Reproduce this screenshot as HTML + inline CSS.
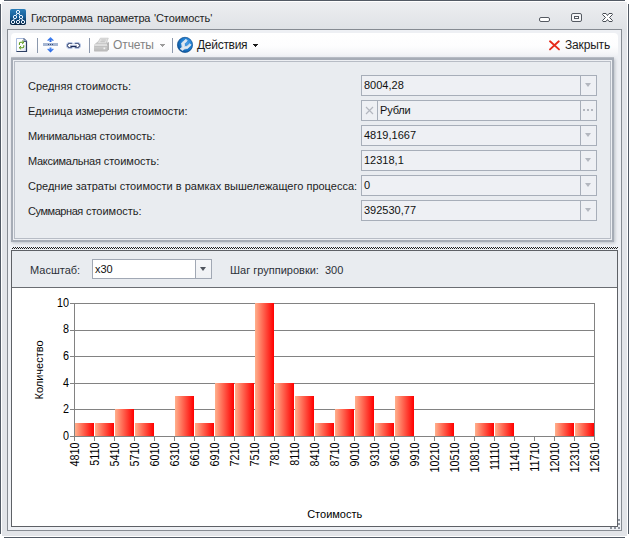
<!DOCTYPE html>
<html lang="ru">
<head>
<meta charset="utf-8">
<title>Гистограмма параметра 'Стоимость'</title>
<style>
html,body{margin:0;padding:0;background:#fff;}
body{width:629px;height:538px;position:relative;overflow:hidden;font-family:"Liberation Sans",sans-serif;font-size:11px;color:#202020;}
.abs{position:absolute;}
#win{position:absolute;left:0;top:0;width:629px;height:538px;background:#fff;}
.edge{position:absolute;background:#525a65;}
#frame{position:absolute;left:2px;top:2px;width:625px;height:534px;background:linear-gradient(#edeef1 0,#e7e9ec 12px,#dfe2e6 27px,#e2e4e8 40px,#e2e4e8 100%);}
.title{position:absolute;left:30px;top:11px;font-size:11px;line-height:14px;color:#1e1e1e;white-space:nowrap;}
#client{position:absolute;left:7px;top:29px;width:613px;height:500px;border:1px solid #868b92;background:#eef0f4;}
#toolbar{position:absolute;left:11px;top:33px;width:607px;height:24px;background:linear-gradient(#ffffff 0,#fdfdfe 55%,#f6f7f9 80%,#eef0f4 100%);border-radius:4px;}
.tsep{position:absolute;top:38px;width:1px;height:15px;background:#8b98ad;}
.tbtxt{position:absolute;top:38px;line-height:14px;font-size:12px;white-space:nowrap;}
#panel{position:absolute;left:11px;top:58px;width:599px;height:180px;border:2px solid #a6acb6;background:#edeff3;box-shadow:1px 1px 3px rgba(90,98,112,.35), 0 -1px 0 rgba(150,156,166,.55);}
#panelin{position:absolute;left:14px;top:61px;width:595px;height:176px;border:1px solid #b7bcc5;background:#e9ecf0;}
.lbl{position:absolute;left:28px;line-height:14px;white-space:nowrap;color:#1e1e1e;}
.inp{position:absolute;left:361px;width:234px;height:19px;border:1px solid #a7aeb9;background:#eef0f4;}
.inp .v{position:absolute;left:2px;top:2px;line-height:14px;white-space:nowrap;color:#101010;}
.inp .dv{position:absolute;left:218px;top:0;width:1px;height:19px;background:#a7aeb9;}
.inp .ar{position:absolute;left:223px;top:7px;width:0;height:0;border-left:3.5px solid transparent;border-right:3.5px solid transparent;border-top:4px solid #b3b7bf;}
#split{position:absolute;left:12px;top:247px;width:606px;height:2px;}
#lower{position:absolute;left:11px;top:250px;width:605px;height:275px;border:1px solid #5e6166;background:#e9ecf0;}
#chartbg{position:absolute;left:12px;top:288px;width:605px;height:238px;background:#fff;}
#chartline{position:absolute;left:12px;top:287px;width:605px;height:1px;background:#6a6d72;}
#combo{position:absolute;left:92px;top:259px;width:118px;height:18px;border:1px solid #a1a8b4;background:#fff;}
</style>
</head>
<body>
<div id="win"><i class="edge" style="left:4px;top:0;width:621px;height:1px"></i><i class="edge" style="left:4px;top:537px;width:621px;height:1px"></i><i class="edge" style="left:0;top:4px;width:1px;height:530px"></i><i class="edge" style="left:628px;top:4px;width:1px;height:530px"></i><div id="frame"></div></div>

<!-- title icon -->
<svg class="abs" style="left:10px;top:9px" width="16" height="16" viewBox="0 0 16 16">
<defs><linearGradient id="ig" x1="0" y1="0" x2="0" y2="1"><stop offset="0" stop-color="#2a7db8"/><stop offset="0.5" stop-color="#155c96"/><stop offset="1" stop-color="#03203e"/></linearGradient></defs>
<rect x="0" y="0" width="16" height="16" rx="1.800" fill="url(#ig)"/>
<g stroke="#eaf4ff" stroke-width="1" fill="none">
<path d="M7 4.600 L6 6.400 M9 4.600 L10 6.400 M4.200 9.600 L3.600 11.200 M10.200 9.600 L9 11.300 M11.800 9.600 L12.500 11.200"/>
<circle cx="8" cy="3" r="1.650"/>
<circle cx="5" cy="8" r="1.650"/>
<circle cx="11" cy="8" r="1.650"/>
<circle cx="3" cy="13" r="1.650"/>
<circle cx="8" cy="13" r="1.650"/>
<circle cx="13" cy="13" r="1.650"/>
</g>
</svg>
<div class="title" style="left:31px;letter-spacing:-.36px">Гистограмма</div><div class="title" style="left:97px;letter-spacing:-.18px">параметра</div><div class="title" style="left:154px;letter-spacing:-.1px">'Стоимость'</div>

<!-- window buttons -->
<svg class="abs" style="left:536px;top:11px" width="82" height="14" viewBox="0 0 82 14">
<rect x="3.5" y="6.5" width="10" height="4" rx="1.5" fill="#fff" stroke="#555a62" stroke-width="1"/>
<rect x="35.5" y="2.5" width="10" height="8" rx="1.5" fill="#f4f5f7" stroke="#555a62" stroke-width="1"/>
<rect x="38.5" y="5.5" width="4" height="2" fill="#fff" stroke="#555a62" stroke-width="1"/>
<path d="M67 2.500 L70 2.500 L71.500 4.500 L73 2.500 L76 2.500 L76.500 3.500 L73.500 6.500 L76.500 9.500 L76 10.500 L73 10.500 L71.500 8.500 L70 10.500 L67 10.500 L66.500 9.500 L69.500 6.500 L66.500 3.500 Z" fill="#fff" stroke="#484d55" stroke-width="1" stroke-linejoin="round"/>
</svg>

<div id="client"></div>
<div id="toolbar"></div>

<!-- toolbar icons -->
<svg class="abs" style="left:15px;top:37px" width="14" height="16" viewBox="0 0 14 16">
<defs><linearGradient id="dg" x1="0" y1="0" x2="1" y2="1"><stop offset="0" stop-color="#ffffff"/><stop offset="0.6" stop-color="#fbfcfe"/><stop offset="1" stop-color="#cfd8ec"/></linearGradient></defs>
<path d="M1.500 1.500 H9 L11.500 4 V14.500 H1.500 Z" fill="url(#dg)" stroke="#a9bbdc" stroke-width="1"/>
<path d="M11.500 4 V14.500 H1.500" fill="none" stroke="#2c3f63" stroke-width="1.200"/>
<path d="M9 1.500 L11.500 4 V4.500 H9 Z" fill="#dfe6f2" stroke="#3d4f76" stroke-width="0.900"/>
<path d="M4.400 7.400 V6.400 Q4.400 5.300 5.600 5.300 H8.400" fill="none" stroke="#5c9a1c" stroke-width="1.050" stroke-linecap="round"/>
<path d="M7.400 3.900 L9 5.300 L7.400 6.700" fill="none" stroke="#5c9a1c" stroke-width="1" stroke-linecap="round" stroke-linejoin="round"/>
<path d="M8.800 8.600 V9.600 Q8.800 10.700 7.600 10.700 H4.800" fill="none" stroke="#5c9a1c" stroke-width="1.050" stroke-linecap="round"/>
<path d="M5.800 9.300 L4.200 10.700 L5.800 12.100" fill="none" stroke="#5c9a1c" stroke-width="1" stroke-linecap="round" stroke-linejoin="round"/>
</svg>
<div class="tsep" style="left:37px"></div>
<svg class="abs" style="left:43px;top:37px" width="16" height="16" viewBox="0 0 16 16">
<defs><linearGradient id="ag" x1="0" y1="0" x2="0" y2="1"><stop offset="0" stop-color="#4c8cf6"/><stop offset="1" stop-color="#2461de"/></linearGradient></defs>
<rect x="0" y="6" width="15" height="3" fill="#a6b6d2"/>
<rect x="5" y="7" width="1" height="1" fill="#3a4c78"/><rect x="7" y="7" width="1" height="1" fill="#3a4c78"/><rect x="9" y="7" width="1" height="1" fill="#3a4c78"/>
<path d="M7.500 0 L10.800 3.300 L10 3.900 L8.500 2.900 V5 H6.500 V2.900 L5 3.900 L4.200 3.300 Z" fill="url(#ag)"/>
<path d="M7.500 15.500 L10.800 12.200 L10 11.600 L8.500 12.600 V10.500 H6.500 V12.600 L5 11.600 L4.200 12.200 Z" fill="url(#ag)"/>
</svg>
<svg class="abs" style="left:65px;top:41px" width="17" height="9" viewBox="0 0 17 9">
<defs><linearGradient id="cp" x1="0" y1="0" x2="0" y2="1"><stop offset="0" stop-color="#ffffff"/><stop offset="0.45" stop-color="#d4def2"/><stop offset="0.7" stop-color="#1a2a58"/><stop offset="1" stop-color="#1a2a58"/></linearGradient></defs>
<rect x="1.500" y="1.500" width="7" height="6" rx="3" fill="none" stroke="#9db2da" stroke-width="1"/>
<rect x="8.500" y="1.500" width="7" height="6" rx="3" fill="none" stroke="#9db2da" stroke-width="1"/>
<rect x="2.500" y="2.500" width="5" height="4" rx="2" fill="#fff" stroke="#1f2f60" stroke-width="1"/>
<rect x="9.500" y="2.500" width="5" height="4" rx="2" fill="#fff" stroke="#1f2f60" stroke-width="1"/>
<rect x="5" y="3" width="7" height="3" rx="1.500" fill="url(#cp)"/>
</svg>
<div class="tsep" style="left:89px"></div>
<svg class="abs" style="left:93px;top:37px" width="18" height="16" viewBox="0 0 18 16">
<defs><linearGradient id="pg" x1="0" y1="0" x2="0" y2="1"><stop offset="0" stop-color="#d9d9d9"/><stop offset="1" stop-color="#b6b6b6"/></linearGradient></defs>
<path d="M1.500 7.200 L4.500 4.800 H15 L13.800 7.200 Z" fill="#c6c6c6"/>
<path d="M13.600 7 L15.900 4.800 V12.300 L14.300 14.300 Z" fill="#a9a9a9"/>
<path d="M7.300 1.200 H15.300 L13 6.600 H4.200 Z" fill="#e0e0e0" stroke="#c4c4c4" stroke-width="0.700"/>
<path d="M8.300 3 H12.800 M7.400 4.700 H11.900" stroke="#bfbfbf" stroke-width="0.900"/>
<rect x="1" y="7" width="13.500" height="7.600" rx="1.200" fill="url(#pg)"/>
<rect x="1.500" y="7.500" width="12.500" height="1.300" fill="#e3e3e3"/>
<rect x="1.500" y="9" width="12.500" height="0.800" fill="#bdbdbd"/>
<rect x="10.500" y="10.500" width="1.700" height="1.700" fill="#f2f2f2"/>
</svg>
<div class="tbtxt" style="left:113px;color:#838383;letter-spacing:-.1px">Отчеты</div>
<i class="abs" style="left:160px;top:44px;width:5px;height:1px;background:#9c9c9c"></i><i class="abs" style="left:161px;top:45px;width:3px;height:1px;background:#9c9c9c"></i><i class="abs" style="left:162px;top:46px;width:1px;height:1px;background:#9c9c9c"></i>
<div class="tsep" style="left:172px"></div>
<svg class="abs" style="left:176px;top:36px" width="18" height="18" viewBox="0 0 18 18">
<defs><radialGradient id="gg" cx="0.62" cy="0.38" r="0.7"><stop offset="0" stop-color="#4d9fe6"/><stop offset="0.55" stop-color="#1d7ccf"/><stop offset="1" stop-color="#0b4f94"/></radialGradient></defs>
<circle cx="9" cy="8.900" r="7.600" fill="url(#gg)" stroke="#0f4d8c" stroke-width=".7"/>
<path d="M10 3.300 L5.600 7 L6.200 11.300 L4.200 12.700 L6.500 14.400 L8.600 12.900 L11.600 12.400 L15.100 9 L13.900 7.700 L11 10.300 L8.600 10.500 L8.400 7.700 L11.200 4.800 Z" fill="#dfe8f1" stroke="#d3dfea" stroke-width=".9" stroke-linejoin="round"/>
</svg>
<div class="tbtxt" style="left:197px;color:#1c1c1c;letter-spacing:-.28px">Действия</div>
<i class="abs" style="left:253px;top:44px;width:5px;height:1px;background:#1a1a1a"></i><i class="abs" style="left:254px;top:45px;width:3px;height:1px;background:#1a1a1a"></i><i class="abs" style="left:255px;top:46px;width:1px;height:1px;background:#1a1a1a"></i>
<svg class="abs" style="left:548px;top:39px" width="13" height="13" viewBox="0 0 13 13">
<path d="M2 2.300 L11 10.400 M10.800 2.300 L2 10.400" stroke="#e62a1a" stroke-width="1.900" stroke-linecap="round"/>
</svg>
<div class="tbtxt" style="left:565px;color:#1c1c1c;letter-spacing:-.17px">Закрыть</div>

<!-- form panel -->
<div id="panel"></div>
<div id="panelin"></div>
<div class="lbl" style="top:79px">Средняя стоимость:</div>
<div class="lbl" style="top:104px">Единица <span style="letter-spacing:-.28px">измерения</span> стоимости:</div>
<div class="lbl" style="top:129px"><span style="letter-spacing:-.27px">Минимальная</span> стоимость:</div>
<div class="lbl" style="top:154px"><span style="letter-spacing:-.28px">Максимальная</span> стоимость:</div>
<div class="lbl" style="top:179px">Средние затраты стоимости в рамках вышележащего процесса:</div>
<div class="lbl" style="top:204px"><span style="letter-spacing:-.44px">Суммарная</span> стоимость:</div>

<div class="inp" style="top:75px"><span class="v">8004,28</span><i class="dv"></i><i class="ar"></i></div>
<div class="inp" style="top:100px"><i class="dv" style="left:15px"></i>
<svg class="abs" style="left:3px;top:5px" width="9" height="9" viewBox="0 0 9 9"><path d="M1 1 L8 8 M8 1 L1 8" stroke="#b3b7bf" stroke-width="1.200"/></svg>
<span class="v" style="left:18px;letter-spacing:-.15px">Рубли</span><i class="dv"></i>
<i class="abs" style="left:221px;top:8px;width:2px;height:2px;background:#b3b7bf"></i><i class="abs" style="left:225px;top:8px;width:2px;height:2px;background:#b3b7bf"></i><i class="abs" style="left:229px;top:8px;width:2px;height:2px;background:#b3b7bf"></i></div>
<div class="inp" style="top:125px"><span class="v">4819,1667</span><i class="dv"></i><i class="ar"></i></div>
<div class="inp" style="top:150px"><span class="v">12318,1</span><i class="dv"></i><i class="ar"></i></div>
<div class="inp" style="top:175px"><span class="v">0</span><i class="dv"></i><i class="ar"></i></div>
<div class="inp" style="top:200px"><span class="v">392530,77</span><i class="dv"></i><i class="ar"></i></div>

<!-- splitter -->
<svg id="split" width="606" height="2" viewBox="0 0 606 2" shape-rendering="crispEdges">
<defs><pattern id="chk" width="2" height="2" patternUnits="userSpaceOnUse"><rect x="0" y="1" width="1" height="1" fill="#1c1c1c"/><rect x="1" y="0" width="1" height="1" fill="#1c1c1c"/></pattern></defs>
<rect width="606" height="2" fill="url(#chk)"/>
</svg>

<!-- lower panel -->
<div id="lower"></div>
<div id="chartbg"></div>
<div id="chartline"></div>
<div class="abs" style="left:30px;top:263px;line-height:14px;color:#2c3038;white-space:nowrap">Масштаб:</div>
<div id="combo"><span class="abs" style="left:2px;top:2px;line-height:14px;color:#101010">x30</span><i class="abs" style="left:102px;top:0;width:1px;height:18px;background:#a1a8b4"></i><i class="abs" style="left:103px;top:0;width:15px;height:18px;background:linear-gradient(#f6f7f9,#eff1f4)"></i><i class="abs" style="left:107px;top:7px;width:0;height:0;border-left:3.500px solid transparent;border-right:3.500px solid transparent;border-top:4px solid #50555e"></i></div>
<div class="abs" style="left:230px;top:263px;line-height:14px;color:#2c3038;white-space:nowrap">Шаг группировки:</div>
<div class="abs" style="left:325px;top:263px;line-height:14px;color:#2c3038;white-space:nowrap">300</div>

<!-- grip -->
<i class="abs" style="left:618px;top:519px;width:2px;height:2px;background:#8f959f"></i><i class="abs" style="left:618px;top:523px;width:2px;height:2px;background:#8f959f"></i><i class="abs" style="left:618px;top:527px;width:2px;height:2px;background:#8f959f"></i><i class="abs" style="left:614px;top:527px;width:2px;height:2px;background:#8f959f"></i><i class="abs" style="left:610px;top:527px;width:2px;height:2px;background:#8f959f"></i>
<!-- CHART -->
<svg id="chart" class="abs" style="left:12px;top:288px" width="605" height="238" viewBox="12 288 605 238" font-family="'Liberation Sans',sans-serif" font-size="11px" fill="#000">
<defs><linearGradient id="bg" x1="0" y1="0" x2="1" y2="0"><stop offset="0" stop-color="#ffb08c"/><stop offset="1" stop-color="#ff0000"/></linearGradient></defs>
<path d="M69.5 436.5 H594.5 M69.5 409.5 H594.5 M69.5 383.5 H594.5 M69.5 356.5 H594.5 M69.5 330.5 H594.5 M69.5 303.5 H594.5" stroke="#828282" stroke-width="1" fill="none" shape-rendering="crispEdges"/>
<path d="M74.5 303.5 V436.5 M594.5 303.5 V436.5" stroke="#828282" stroke-width="1" fill="none" shape-rendering="crispEdges"/>
<path d="M74.5 436.5 V441.0 M94.5 436.5 V441.0 M114.5 436.5 V441.0 M134.5 436.5 V441.0 M154.5 436.5 V441.0 M174.5 436.5 V441.0 M194.5 436.5 V441.0 M214.5 436.5 V441.0 M234.5 436.5 V441.0 M254.5 436.5 V441.0 M274.5 436.5 V441.0 M294.5 436.5 V441.0 M314.5 436.5 V441.0 M334.5 436.5 V441.0 M354.5 436.5 V441.0 M374.5 436.5 V441.0 M394.5 436.5 V441.0 M414.5 436.5 V441.0 M434.5 436.5 V441.0 M454.5 436.5 V441.0 M474.5 436.5 V441.0 M494.5 436.5 V441.0 M514.5 436.5 V441.0 M534.5 436.5 V441.0 M554.5 436.5 V441.0 M574.5 436.5 V441.0 M594.5 436.5 V441.0" stroke="#828282" stroke-width="1" fill="none" shape-rendering="crispEdges"/>
<rect x="75" y="423" width="19" height="13" fill="url(#bg)" shape-rendering="crispEdges"/>
<rect x="95" y="423" width="19" height="13" fill="url(#bg)" shape-rendering="crispEdges"/>
<rect x="115" y="409" width="19" height="27" fill="url(#bg)" shape-rendering="crispEdges"/>
<rect x="135" y="423" width="19" height="13" fill="url(#bg)" shape-rendering="crispEdges"/>
<rect x="175" y="396" width="19" height="40" fill="url(#bg)" shape-rendering="crispEdges"/>
<rect x="195" y="423" width="19" height="13" fill="url(#bg)" shape-rendering="crispEdges"/>
<rect x="215" y="383" width="19" height="53" fill="url(#bg)" shape-rendering="crispEdges"/>
<rect x="235" y="383" width="19" height="53" fill="url(#bg)" shape-rendering="crispEdges"/>
<rect x="255" y="303" width="19" height="133" fill="url(#bg)" shape-rendering="crispEdges"/>
<rect x="275" y="383" width="19" height="53" fill="url(#bg)" shape-rendering="crispEdges"/>
<rect x="295" y="396" width="19" height="40" fill="url(#bg)" shape-rendering="crispEdges"/>
<rect x="315" y="423" width="19" height="13" fill="url(#bg)" shape-rendering="crispEdges"/>
<rect x="335" y="409" width="19" height="27" fill="url(#bg)" shape-rendering="crispEdges"/>
<rect x="355" y="396" width="19" height="40" fill="url(#bg)" shape-rendering="crispEdges"/>
<rect x="375" y="423" width="19" height="13" fill="url(#bg)" shape-rendering="crispEdges"/>
<rect x="395" y="396" width="19" height="40" fill="url(#bg)" shape-rendering="crispEdges"/>
<rect x="435" y="423" width="19" height="13" fill="url(#bg)" shape-rendering="crispEdges"/>
<rect x="475" y="423" width="19" height="13" fill="url(#bg)" shape-rendering="crispEdges"/>
<rect x="495" y="423" width="19" height="13" fill="url(#bg)" shape-rendering="crispEdges"/>
<rect x="555" y="423" width="19" height="13" fill="url(#bg)" shape-rendering="crispEdges"/>
<rect x="575" y="423" width="19" height="13" fill="url(#bg)" shape-rendering="crispEdges"/>
<text transform="translate(69 439.8) scale(.9 1)" font-size="12px" text-anchor="end">0</text>
<text transform="translate(69 413.2) scale(.9 1)" font-size="12px" text-anchor="end">2</text>
<text transform="translate(69 386.6) scale(.9 1)" font-size="12px" text-anchor="end">4</text>
<text transform="translate(69 360.0) scale(.9 1)" font-size="12px" text-anchor="end">6</text>
<text transform="translate(69 333.4) scale(.9 1)" font-size="12px" text-anchor="end">8</text>
<text transform="translate(69 306.8) scale(.9 1)" font-size="12px" text-anchor="end">10</text>
<text transform="translate(78.8 442.5) rotate(-90) scale(.9 1)" font-size="12px" text-anchor="end">4810</text>
<text transform="translate(98.8 442.5) rotate(-90) scale(.9 1)" font-size="12px" text-anchor="end">5110</text>
<text transform="translate(118.8 442.5) rotate(-90) scale(.9 1)" font-size="12px" text-anchor="end">5410</text>
<text transform="translate(138.8 442.5) rotate(-90) scale(.9 1)" font-size="12px" text-anchor="end">5710</text>
<text transform="translate(158.8 442.5) rotate(-90) scale(.9 1)" font-size="12px" text-anchor="end">6010</text>
<text transform="translate(178.8 442.5) rotate(-90) scale(.9 1)" font-size="12px" text-anchor="end">6310</text>
<text transform="translate(198.8 442.5) rotate(-90) scale(.9 1)" font-size="12px" text-anchor="end">6610</text>
<text transform="translate(218.8 442.5) rotate(-90) scale(.9 1)" font-size="12px" text-anchor="end">6910</text>
<text transform="translate(238.8 442.5) rotate(-90) scale(.9 1)" font-size="12px" text-anchor="end">7210</text>
<text transform="translate(258.8 442.5) rotate(-90) scale(.9 1)" font-size="12px" text-anchor="end">7510</text>
<text transform="translate(278.8 442.5) rotate(-90) scale(.9 1)" font-size="12px" text-anchor="end">7810</text>
<text transform="translate(298.8 442.5) rotate(-90) scale(.9 1)" font-size="12px" text-anchor="end">8110</text>
<text transform="translate(318.8 442.5) rotate(-90) scale(.9 1)" font-size="12px" text-anchor="end">8410</text>
<text transform="translate(338.8 442.5) rotate(-90) scale(.9 1)" font-size="12px" text-anchor="end">8710</text>
<text transform="translate(358.8 442.5) rotate(-90) scale(.9 1)" font-size="12px" text-anchor="end">9010</text>
<text transform="translate(378.8 442.5) rotate(-90) scale(.9 1)" font-size="12px" text-anchor="end">9310</text>
<text transform="translate(398.8 442.5) rotate(-90) scale(.9 1)" font-size="12px" text-anchor="end">9610</text>
<text transform="translate(418.8 442.5) rotate(-90) scale(.9 1)" font-size="12px" text-anchor="end">9910</text>
<text transform="translate(438.8 442.5) rotate(-90) scale(.9 1)" font-size="12px" text-anchor="end">10210</text>
<text transform="translate(458.8 442.5) rotate(-90) scale(.9 1)" font-size="12px" text-anchor="end">10510</text>
<text transform="translate(478.8 442.5) rotate(-90) scale(.9 1)" font-size="12px" text-anchor="end">10810</text>
<text transform="translate(498.8 442.5) rotate(-90) scale(.9 1)" font-size="12px" text-anchor="end">11110</text>
<text transform="translate(518.8 442.5) rotate(-90) scale(.9 1)" font-size="12px" text-anchor="end">11410</text>
<text transform="translate(538.8 442.5) rotate(-90) scale(.9 1)" font-size="12px" text-anchor="end">11710</text>
<text transform="translate(558.8 442.5) rotate(-90) scale(.9 1)" font-size="12px" text-anchor="end">12010</text>
<text transform="translate(578.8 442.5) rotate(-90) scale(.9 1)" font-size="12px" text-anchor="end">12310</text>
<text transform="translate(598.8 442.5) rotate(-90) scale(.9 1)" font-size="12px" text-anchor="end">12610</text>
<text x="334.700" y="518" text-anchor="middle">Стоимость</text>
<text transform="translate(43 370) rotate(-90)" text-anchor="middle">Количество</text>
</svg>
</body>
</html>
